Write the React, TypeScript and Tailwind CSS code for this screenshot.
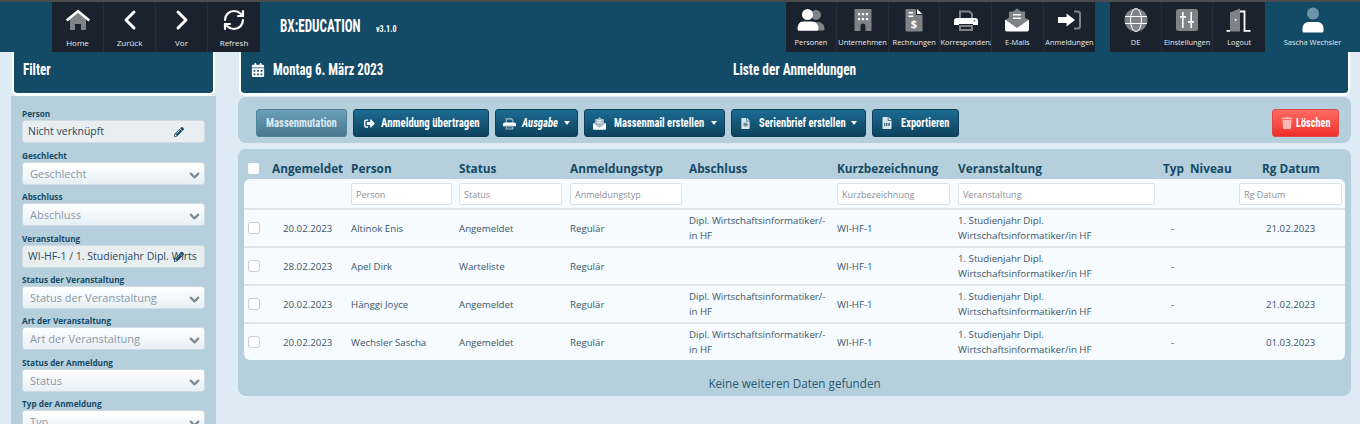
import { ChevronLeft, ChevronRight, RefreshCw, ChevronDown } from "lucide-react";
import { FaCalendarAlt, FaPencilAlt, FaSignOutAlt, FaTrash, FaFileCsv, FaFileAlt } from "react-icons/fa";
import type { ReactNode } from "react";

const GRAY = "#7f8387";

// duotone nav icons, white + gray like the original icon set
const HomeIcon = () => (
  <svg viewBox="0 0 26 24" className="h-[24px] w-[26px]">
    <path d="M5 11.500 13 5l8 6.500V21a1 1 0 0 1-1 1h-4v-6h-6v6H6a1 1 0 0 1-1-1z" fill={GRAY} />
    <path d="M13 1.500 .8 11.600 2.600 13.600 13 5l10.400 8.600 1.800-2L13 1.500z" fill="#fff" />
  </svg>
);
const PeopleIcon = () => (
  <svg viewBox="0 0 28 24" className="h-[24px] w-[28px]">
    <circle cx="19" cy="7" r="5" fill={GRAY} />
    <path d="M18 14h3c4 0 6.500 3 6.500 7 0 1-.5 1.500-1.500 1.500h-8z" fill={GRAY} />
    <circle cx="10.500" cy="6.500" r="5.500" fill="#fff" />
    <path d="M6 13.500h9c4 0 6.500 3.500 6.500 7.500 0 1-.7 1.800-1.800 1.800H2.300C1.200 22.800.500 22 .500 21c0-4 2-7.500 5.500-7.500z" fill="#fff" />
  </svg>
);
const BuildingIcon = () => (
  <svg viewBox="0 0 18 24" className="h-[24px] w-[18px]">
    <path d="M1.500 1h15a1 1 0 0 1 1 1v21h-6v-5a2.500 2.500 0 0 0-5 0v5h-6V2a1 1 0 0 1 1-1z" fill={GRAY} />
    <g fill="#fff">
      <rect x="4" y="5" width="2.200" height="2.200" /><rect x="8" y="5" width="2.200" height="2.200" /><rect x="12" y="5" width="2.200" height="2.200" />
      <rect x="4" y="10" width="2.200" height="2.200" /><rect x="8" y="10" width="2.200" height="2.200" /><rect x="12" y="10" width="2.200" height="2.200" />
    </g>
  </svg>
);
const InvoiceIcon = () => (
  <svg viewBox="0 0 18 24" className="h-[24px] w-[18px]">
    <path d="M1.500 1H11v6h6.500v15.500a1 1 0 0 1-1 1h-15a1 1 0 0 1-1-1V2a1 1 0 0 1 1-1z" fill={GRAY} />
    <path d="M12 1l5.500 5H12z" fill="#fff" />
    <rect x="3.500" y="4" width="5" height="1.500" fill="#fff" />
    <rect x="3.500" y="7.500" width="5" height="1.500" fill="#fff" />
    <text x="9" y="20" textAnchor="middle" fontSize="11" fontWeight="700" fontFamily="'Open Sans', sans-serif" fill="#fff">$</text>
  </svg>
);
const PrinterIcon = ({ className = "h-[24px] w-[24px]", gray = GRAY }: { className?: string; gray?: string }) => (
  <svg viewBox="0 0 24 24" className={className}>
    <path d="M5 10V2.500h11l3 3V10h-2V6.500L15 4.500H7V10z" fill={gray} />
    <path d="M5 17h14v6H5zm2 2v2h10v-2z" fill={gray} fillRule="evenodd" />
    <path d="M3 10h18a3 3 0 0 1 3 3v4h-5v-1H5v1H0v-4a3 3 0 0 1 3-3z" fill="#fff" />
    <circle cx="20.500" cy="12.800" r="1" fill={gray} />
  </svg>
);
const MailIcon = ({ className = "h-[24px] w-[24px]", gray = GRAY }: { className?: string; gray?: string }) => (
  <svg viewBox="0 0 24 24" className={className}>
    <path d="M12 .500 16 3.500h4v6l4 3-12 8-12-8 4-3v-6h4z" fill={gray} />
    <rect x="8" y="6" width="8" height="1.500" fill="#fff" />
    <rect x="8" y="9.500" width="8" height="1.500" fill="#fff" />
    <path d="M0 11.500 12 20l12-8.500v10a2 2 0 0 1-2 2H2a2 2 0 0 1-2-2z" fill="#fff" />
  </svg>
);
const SignInIcon = () => (
  <svg viewBox="0 0 24 24" className="h-[24px] w-[24px]">
    <path d="M17 3.500h3.500a2.500 2.500 0 0 1 2.500 2.500v12a2.500 2.500 0 0 1-2.500 2.500H17" fill="none" stroke={GRAY} strokeWidth="2" />
    <path d="M9.500 5.500 18 12l-8.500 6.500V15H1V9h8.500z" fill="#fff" />
  </svg>
);
const GlobeIcon = () => (
  <svg viewBox="0 0 24 24" className="h-[24px] w-[24px]">
    <circle cx="12" cy="12" r="11.500" fill={GRAY} />
    <g fill="none" stroke="#fff" strokeWidth="1">
      <ellipse cx="12" cy="12" rx="5.500" ry="11.500" />
      <path d="M1 8.500h22M1 15.500h22" />
    </g>
  </svg>
);
const SlidersIcon = () => (
  <svg viewBox="0 0 24 24" className="h-[24px] w-[24px]">
    <rect x="1" y="1" width="22" height="22" rx="2.500" fill={GRAY} />
    <g fill="#fff">
      <rect x="7" y="4" width="1.600" height="4" /><rect x="5" y="8" width="6" height="1.800" /><rect x="7" y="10" width="1.600" height="10" />
      <rect x="15.400" y="4" width="1.600" height="9" /><rect x="13" y="13" width="6" height="1.800" /><rect x="15.400" y="15" width="1.600" height="5" />
    </g>
  </svg>
);
const DoorIcon = () => (
  <svg viewBox="0 0 26 24" className="h-[24px] w-[26px]">
    <path d="M4 4.500 14 .500v23H4z" fill={GRAY} />
    <rect x="8.800" y="11" width="1.700" height="1.700" fill="#fff" />
    <path d="M.500 22.800H4M14 3.500h4.500v19.300h6" fill="none" stroke="#fff" strokeWidth="1.800" />
  </svg>
);
const UserIcon = () => (
  <svg viewBox="0 0 22 26" className="h-[26px] w-[22px]">
    <circle cx="11" cy="6.500" r="6" fill="#6d95aa" />
    <path d="M6.500 15h9a6 6 0 0 1 6 6v3a1.500 1.500 0 0 1-1.500 1.500H2A1.500 1.500 0 0 1 .500 24v-3a6 6 0 0 1 6-6z" fill="#fff" />
  </svg>
);

const NAV_LEFT: [string, ReactNode][] = [
  ["Home", <HomeIcon />],
  ["Zurück", <ChevronLeft size={32} strokeWidth={2.2} color="#fff" />],
  ["Vor", <ChevronRight size={32} strokeWidth={2.2} color="#fff" />],
  ["Refresh", <RefreshCw size={24} strokeWidth={2.2} color="#fff" />],
];
const NAV_MID: [string, ReactNode][] = [
  ["Personen", <PeopleIcon />],
  ["Unternehmen", <BuildingIcon />],
  ["Rechnungen", <InvoiceIcon />],
  ["Korrespondenz", <PrinterIcon />],
  ["E-Mails", <MailIcon />],
  ["Anmeldungen", <SignInIcon />],
];
const NAV_RIGHT: [string, ReactNode][] = [
  ["DE", <GlobeIcon />],
  ["Einstellungen", <SlidersIcon />],
  ["Logout", <DoorIcon />],
];

function NavGroup({ items, itemClass, labelClass }: { items: [string, ReactNode][]; itemClass: string; labelClass: string }) {
  return (
    <div className="flex h-[50px] bg-[#1a222d]">
      {items.map(([label, icon]) => (
        <div key={label} className={`flex h-full flex-col items-center overflow-hidden border-r border-[#242d38] last:border-r-0 ${itemClass}`}>
          <div className="flex h-[35px] items-center justify-center">{icon}</div>
          <span className={`w-full text-center leading-[11px] whitespace-nowrap text-[#e6e9ec] ${labelClass}`}>{label}</span>
        </div>
      ))}
    </div>
  );
}

// The original heading font is much narrower than anything installed,
// so Roboto condensed gets squeezed a bit more inside a fixed width box.
function Narrow({ box, squeeze, children }: { box: string; squeeze: string; children: ReactNode }) {
  return (
    <span className={`inline-block whitespace-nowrap ${box}`}>
      <span className={`inline-block origin-left ${squeeze}`}>{children}</span>
    </span>
  );
}

const FIELDS: { label: string; value: string; kind: "input" | "select" }[] = [
  { label: "Person", value: "Nicht verknüpft", kind: "input" },
  { label: "Geschlecht", value: "Geschlecht", kind: "select" },
  { label: "Abschluss", value: "Abschluss", kind: "select" },
  { label: "Veranstaltung", value: "WI-HF-1 / 1. Studienjahr Dipl. Wirtschaftsinformatiker", kind: "input" },
  { label: "Status der Veranstaltung", value: "Status der Veranstaltung", kind: "select" },
  { label: "Art der Veranstaltung", value: "Art der Veranstaltung", kind: "select" },
  { label: "Status der Anmeldung", value: "Status", kind: "select" },
  { label: "Typ der Anmeldung", value: "Typ", kind: "select" },
];

function Field({ label, value, kind }: { label: string; value: string; kind: "input" | "select" }) {
  return (
    <div>
      <div className="flex h-[18.400px] items-end pb-[1px] text-[8.200px] leading-[11px] font-bold text-[#174a66]">{label}</div>
      {kind === "input" ? (
        <div className="relative h-[23px] rounded-[3px] border border-[#cfdbe3] bg-[#e9eef1] pl-[5px] pr-[7px] text-[10.500px] leading-[21px] text-[#2c4a5c]">
          <div className="overflow-hidden whitespace-nowrap">{value}</div>
          <FaPencilAlt className="absolute top-[6px] right-[20px] text-[10px] text-[#174a66]" />
        </div>
      ) : (
        <div className="relative h-[23px] rounded-[3px] border border-[#cfdbe3] bg-gradient-to-b from-[#ffffff] to-[#e7f0f6] pl-[7px] text-[11px] leading-[21px] text-[#8b98a6]">
          {value}
          <ChevronDown size={15} strokeWidth={3.500} className="absolute top-[5px] right-[2px] text-[#7c8a96]" />
        </div>
      )}
    </div>
  );
}

const COLS = "grid grid-cols-[107px_108px_111px_119px_148px_121px_205px_27px_49px_107px]";

const ROWS = [
  { date: "20.02.2023", person: "Altinok Enis", status: "Angemeldet", abschluss: true, rg: "21.02.2023" },
  { date: "28.02.2023", person: "Apel Dirk", status: "Warteliste", abschluss: false, rg: "" },
  { date: "20.02.2023", person: "Hänggi Joyce", status: "Angemeldet", abschluss: true, rg: "21.02.2023" },
  { date: "20.02.2023", person: "Wechsler Sascha", status: "Angemeldet", abschluss: true, rg: "01.03.2023" },
];

function FilterInput({ text, w }: { text: string; w: string }) {
  return (
    <div className={`h-[22px] rounded-[2px] border border-[#dfe3e7] bg-white pl-[4px] text-[9px] leading-[21px] text-[#8a9097] ${w}`}>{text}</div>
  );
}

const cond = "font-['Roboto',sans-serif] [font-stretch:75%]";

function Btn({ w, icon, children, caret }: { w: string; icon: ReactNode; children: ReactNode; caret?: boolean }) {
  return (
    <div className={`flex h-[28px] items-center justify-center gap-[6px] rounded-[3px] border border-[#0f3f58] bg-gradient-to-b from-[#1c6b92] to-[#0f4360] text-[13px] font-bold whitespace-nowrap text-white ${cond} ${w}`}>
      {icon}
      {children}
      {caret && <span className="h-0 w-0 border-x-[3.500px] border-t-[4px] border-x-transparent border-t-white" />}
    </div>
  );
}

export default function App() {
  return (
    <div className="h-[424px] w-[1360px] overflow-hidden bg-[#deebf5] font-['Open_Sans',sans-serif]">
      {/* Top bar */}
      <header className="flex h-[52px] border-t-2 border-[#4a4d50] bg-[#134a66]">
        <div className="ml-[52px]">
          <NavGroup items={NAV_LEFT} itemClass="w-[52px]" labelClass="text-[8px]" />
        </div>
        <div className={`ml-[20px] flex items-baseline pt-[12px] text-white ${cond} font-bold`}>
          <span className="text-[18px] leading-[24px]">
            <Narrow box="w-[81px]" squeeze="scale-x-[0.727]">BX:EDUCATION</Narrow>
          </span>
          <span className="ml-[15px] text-[9.500px]">
            <Narrow box="w-[21px]" squeeze="scale-x-[0.85]">v3.1.0</Narrow>
          </span>
        </div>
        <div className="ml-auto">
          <NavGroup items={NAV_MID} itemClass="w-[51.600px]" labelClass="text-[7.400px]" />
        </div>
        <div className="ml-[15px]">
          <NavGroup items={NAV_RIGHT} itemClass="w-[51.600px]" labelClass="text-[7.400px]" />
        </div>
        <div className="flex w-[95px] flex-col items-center">
          <div className="flex h-[35px] items-center"><UserIcon /></div>
          <span className="text-[7.400px] leading-[11px] whitespace-nowrap text-[#e6e9ec]">Sascha Wechsler</span>
        </div>
      </header>

      <div className="flex">
        {/* Filter sidebar */}
        <aside className="ml-[11px] w-[205px]">
          <div className="mx-[1px] flex h-[44px] items-start rounded-b-[6px] border-x-[2px] border-b-[3px] border-white bg-[#134a66] pt-[8px] pl-[9px]">
            <span className={`text-[16px] leading-[20px] font-bold text-white ${cond}`}>
              <Narrow box="w-[28px]" squeeze="scale-x-[0.825]">Filter</Narrow>
            </span>
          </div>
          <div className="h-[400px] bg-[#b5cfdc] px-[11px] pt-[6px]">
            {FIELDS.map((f) => (
              <Field key={f.label} {...f} />
            ))}
          </div>
        </aside>

        {/* Main column */}
        <main className="ml-[22px] w-[1113px]">
          <div className="mx-[1px] grid h-[44px] grid-cols-[1fr_auto_1fr] items-start rounded-b-[6px] border-x-[2px] border-b-[3px] border-white bg-[#134a66] px-[10px] pt-[8px]">
            <div className={`flex items-center gap-[8px] text-[16px] leading-[20px] font-bold text-white ${cond}`}>
              <FaCalendarAlt className="text-[14px]" />
              <Narrow box="w-[110px]" squeeze="scale-x-[0.806]">Montag 6. März 2023</Narrow>
            </div>
            <div className={`text-[16px] leading-[20px] font-bold text-white ${cond}`}>
              <Narrow box="w-[123px]" squeeze="scale-x-[0.834]">Liste der Anmeldungen</Narrow>
            </div>
          </div>

          {/* Toolbar */}
          <div className="mt-[1px] flex h-[46px] items-start gap-[6px] rounded-[8px] bg-[#b5cfdc] pt-[12px] pr-[12px] pl-[18px]">
            <div className={`flex h-[28px] w-[91px] items-center justify-center rounded-[3px] border border-[#4f8199] bg-gradient-to-b from-[#6b9fb8] to-[#47788f] text-[13px] font-bold text-[#dfeaf0] ${cond}`}>
              <Narrow box="w-[71px]" squeeze="scale-x-[0.817]">Massenmutation</Narrow>
            </div>
            <Btn w="w-[136px]" icon={<FaSignOutAlt className="text-[11px]" />}>
              <Narrow box="w-[98px]" squeeze="scale-x-[0.83]">Anmeldung übertragen</Narrow>
            </Btn>
            <Btn w="w-[83px]" caret icon={<PrinterIcon className="h-[13px] w-[13px]" gray="#a9bcc8" />}>
              <Narrow box="w-[36px] italic" squeeze="scale-x-[0.817]">Ausgabe</Narrow>
            </Btn>
            <Btn w="w-[141px]" caret icon={<MailIcon className="mr-[2px] h-[13px] w-[13px]" gray="#a9bcc8" />}>
              <Narrow box="w-[91px]" squeeze="scale-x-[0.808]">Massenmail erstellen</Narrow>
            </Btn>
            <Btn w="w-[135px]" caret icon={<FaFileAlt className="mr-[2px] text-[11px] text-[#dbe6ec]" />}>
              <Narrow box="w-[86px]" squeeze="scale-x-[0.812]">Serienbrief erstellen</Narrow>
            </Btn>
            <Btn w="w-[87px]" icon={<FaFileCsv className="mr-[2px] text-[12px] text-[#dbe6ec]" />}>
              <Narrow box="w-[49px]" squeeze="scale-x-[0.808]">Exportieren</Narrow>
            </Btn>
            <div className={`ml-auto flex h-[28px] w-[67px] items-center justify-center gap-[3px] rounded-[3px] border border-[#e04a45] bg-gradient-to-b from-[#ff6a63] to-[#f02c28] text-[13px] font-bold text-white ${cond}`}>
              <FaTrash className="text-[12px] text-[#f8b9b5]" />
              <Narrow box="w-[35px]" squeeze="scale-x-[0.794]">Löschen</Narrow>
            </div>
          </div>

          {/* Table */}
          <div className="mt-[6px] h-[247px] rounded-[8px] bg-[#b5cfdc] px-[6px]">
            <div className={`${COLS} h-[30px] items-center pt-[9px] text-[11.800px] font-bold text-[#174a66]`}>
              <div className="flex items-center">
                <span className="ml-[4px] h-[11px] w-[11px] rounded-[2px] bg-white" />
                <span className="ml-[13px]">Angemeldet</span>
              </div>
              <div>Person</div>
              <div>Status</div>
              <div>Anmeldungstyp</div>
              <div>Abschluss</div>
              <div>Kurzbezeichnung</div>
              <div>Veranstaltung</div>
              <div>Typ</div>
              <div>Niveau</div>
              <div className="pl-[23px]">Rg Datum</div>
            </div>
            <div className="overflow-hidden rounded-[6px] bg-[#f5fbff]">
              <div className={`${COLS} h-[29px] items-center`}>
                <div />
                <FilterInput text="Person" w="w-[101px]" />
                <FilterInput text="Status" w="w-[103px]" />
                <FilterInput text="Anmeldungstyp" w="w-[112px]" />
                <div />
                <FilterInput text="Kurzbezeichnung" w="w-[113px]" />
                <FilterInput text="Veranstaltung" w="w-[197px]" />
                <div />
                <div />
                <FilterInput text="Rg Datum" w="w-[103px]" />
              </div>
              {ROWS.map((r) => (
                <div key={r.person} className={`${COLS} h-[38px] items-center border-t-2 border-[#dfe5ea] text-[9.700px] leading-[15px] text-[#3c5566]`}>
                  <div className="flex items-center">
                    <span className="ml-[4px] h-[12px] w-[12px] rounded-[3px] border border-[#c5ccd2] bg-white" />
                    <span className="ml-[23px]">{r.date}</span>
                  </div>
                  <div>{r.person}</div>
                  <div>{r.status}</div>
                  <div>Regulär</div>
                  <div>{r.abschluss && <>Dipl. Wirtschaftsinformatiker/-<br />in HF</>}</div>
                  <div>WI-HF-1</div>
                  <div>1. Studienjahr Dipl.<br />Wirtschaftsinformatiker/in HF</div>
                  <div className="pl-[8px]">-</div>
                  <div />
                  <div className="pl-[27px]">{r.rg}</div>
                </div>
              ))}
            </div>
            <div className="pt-[15px] text-center text-[11.700px] leading-[16px] text-[#2c5a73]">Keine weiteren Daten gefunden</div>
          </div>
        </main>
      </div>
    </div>
  );
}
